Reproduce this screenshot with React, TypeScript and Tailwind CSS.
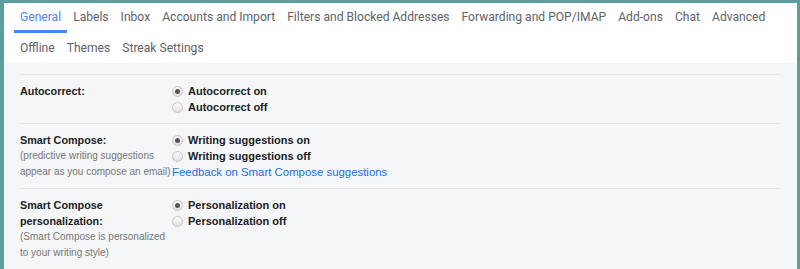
import React from "react";

const tabs1 = [
  "General",
  "Labels",
  "Inbox",
  "Accounts and Import",
  "Filters and Blocked Addresses",
  "Forwarding and POP/IMAP",
  "Add-ons",
  "Chat",
  "Advanced",
];
const tabs2 = ["Offline", "Themes", "Streak Settings"];

function Radio({ checked }: { checked?: boolean }) {
  return (
    <span className="w-[11px] h-[11px] rounded-full border border-[#c4c4c4] bg-gradient-to-b from-[#fbfbfb] to-[#e2e2e2] flex items-center justify-center shrink-0">
      {checked && <span className="w-[5px] h-[5px] rounded-full bg-[#555]" />}
    </span>
  );
}

function Option({ label, checked }: { label: string; checked?: boolean }) {
  return (
    <div className="flex items-center h-[16px] gap-[5px] whitespace-nowrap">
      <Radio checked={checked} />
      <span className="font-bold text-[#222]">{label}</span>
    </div>
  );
}

function Section({
  title,
  sub,
  children,
}: {
  title: React.ReactNode;
  sub?: React.ReactNode;
  children: React.ReactNode;
}) {
  return (
    <div className="flex border-t border-[#e3e5e6] pt-[8px] pb-[8px]">
      <div className="w-[152px] shrink-0 whitespace-nowrap">
        <div className="font-bold text-[#222] text-[10.8px]">{title}</div>
        {sub && <div className="text-[#777] text-[10px]">{sub}</div>}
      </div>
      <div className="flex flex-col">{children}</div>
    </div>
  );
}

export default function App() {
  return (
    <div className="w-[800px] h-[269px] bg-[#5c9e9c] pl-[4px] pr-[3px] pt-[3px] overflow-hidden">
      <div className="bg-white h-full flex flex-col">
        <div
          className="flex flex-col text-[12.1px] text-[#5f6368] whitespace-nowrap"
          style={{ fontFamily: "Roboto, 'Open Sans', sans-serif" }}
        >
          <div className="flex pl-[10px] h-[30px]">
            {tabs1.map((t, i) => (
              <div
                key={t}
                className={
                  i === 0
                    ? "px-[6px] flex items-center text-[#4a86ef] border-b-[3px] border-[#4a86ef] pt-[1px]"
                    : "px-[6px] flex items-center pb-[2px]"
                }
              >
                {t}
              </div>
            ))}
          </div>
          <div className="flex pl-[10px] h-[30px]">
            {tabs2.map((t) => (
              <div key={t} className="px-[6px] flex items-center">
                {t}
              </div>
            ))}
          </div>
        </div>
        <div
          className="flex-1 bg-[#f4f6f7] px-[16px] pt-[11px] text-[11px] leading-[16px]"
          style={{ fontFamily: "'Liberation Sans', Arial, sans-serif" }}
        >
          <Section title="Autocorrect:">
            <Option label="Autocorrect on" checked />
            <Option label="Autocorrect off" />
          </Section>
          <Section
            title="Smart Compose:"
            sub={
              <>
                (predictive writing suggestions
                <br />
                appear as you compose an email)
              </>
            }
          >
            <Option label="Writing suggestions on" checked />
            <Option label="Writing suggestions off" />
            <div className="h-[16px] flex items-center text-[#1a6fe0] text-[11.4px] whitespace-nowrap">
              Feedback on Smart Compose suggestions
            </div>
          </Section>
          <Section
            title={
              <>
                Smart Compose
                <br />
                personalization:
              </>
            }
            sub={
              <>
                (Smart Compose is personalized
                <br />
                to your writing style)
              </>
            }
          >
            <Option label="Personalization on" checked />
            <Option label="Personalization off" />
          </Section>
        </div>
      </div>
    </div>
  );
}
